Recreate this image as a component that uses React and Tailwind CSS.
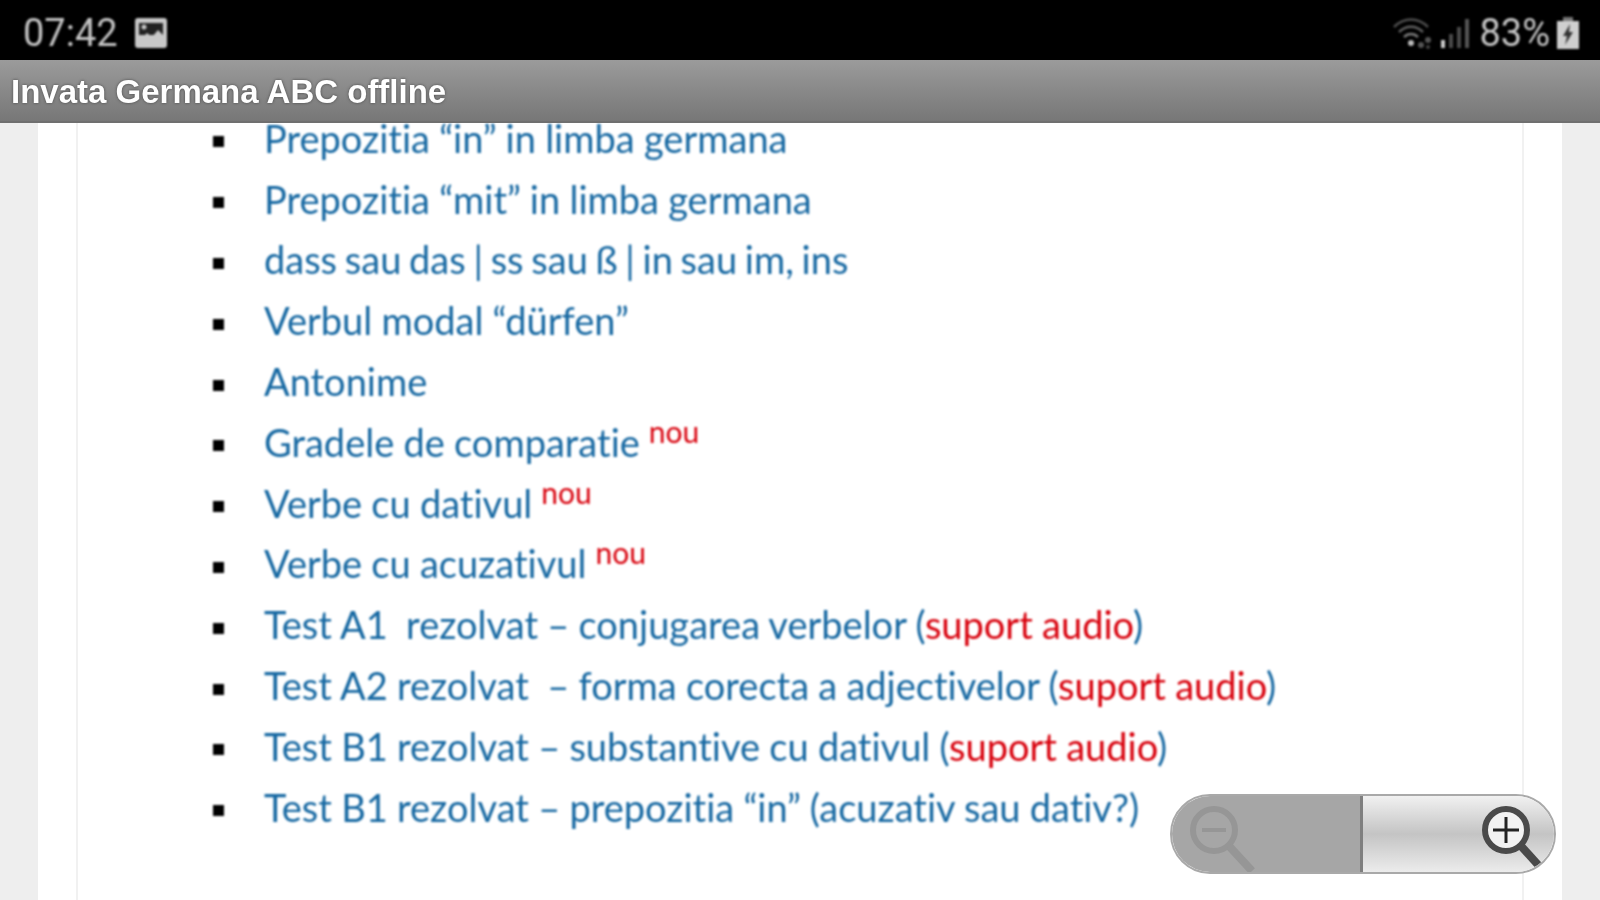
const items = [
  { text: "Prepozitia “in” in limba germana" },
  { text: "Prepozitia “mit” in limba germana" },
  { text: "dass sau das | ss sau ß | in sau im, ins", tight: true },
  { text: "Verbul modal “dürfen”" },
  { text: "Antonime" },
  { text: "Gradele de comparatie", isNew: true },
  { text: "Verbe cu dativul", isNew: true },
  { text: "Verbe cu acuzativul", isNew: true },
  { text: "Test A1\u00a0 rezolvat – conjugarea verbelor", audio: true },
  { text: "Test A2 rezolvat\u00a0 – forma corecta a adjectivelor", audio: true },
  { text: "Test B1 rezolvat – substantive cu dativul", audio: true },
  { text: "Test B1 rezolvat – prepozitia “in” (acuzativ sau dativ?)" },
];

const StatusIcons = () => (
  <div className="mt-[5px] flex items-center blur-[0.8px]">
    <svg width="42" height="34" viewBox="0 0 42 34" fill="none" className="mr-[1px] -translate-x-[5px]">
      <path d="M2 11C12 1 26 1 36 11" stroke="#4d4d4d" strokeWidth="2.5" />
      <path d="M7 16C14 9 24 9 31 16" stroke="#5f5f5f" strokeWidth="2.5" />
      <path d="M12 21C16 17 22 17 26 21" stroke="#777" strokeWidth="2.5" />
      <circle cx="19" cy="27" r="3" fill="#bbb" />
      <circle cx="29" cy="29" r="3" fill="#555" />
      <circle cx="36" cy="24" r="3" fill="#555" />
      <circle cx="36" cy="31" r="2" fill="#444" />
    </svg>
    <svg width="32" height="30" viewBox="0 0 32 30" className="mr-[7px]">
      <rect x="1" y="22" width="4" height="8" fill="#ccc" />
      <rect x="9" y="16" width="4" height="14" fill="#4a4a4a" />
      <rect x="17" y="9" width="4" height="21" fill="#4a4a4a" />
      <rect x="25" y="1" width="4" height="29" fill="#555" />
    </svg>
    <span className="text-[38px] leading-none text-[#c4c4c4] font-['Roboto',sans-serif]">83%</span>
    <svg width="24" height="32" viewBox="0 0 24 32" className="ml-[6px]">
      <rect x="7" y="0" width="10" height="4" fill="#777" />
      <rect x="1" y="4" width="22" height="28" fill="#cfcfcf" />
      <path d="M14 7L7 19H11L9 28L17 15H13Z" fill="#333" />
    </svg>
  </div>
);

const ZoomControl = () => (
  <div className="absolute left-[1170px] top-[794px] flex h-[80px] w-[386px] overflow-hidden rounded-[40px] border-2 border-[#a9a9a9] blur-[0.6px]">
    <div className="flex h-full w-[191px] items-center border-r-[3px] border-[#7f7f7f] bg-[#a6a6a6] pl-[16px]">
      <svg width="72" height="68" viewBox="0 0 72 68" fill="none" className="mt-[10px]">
        <circle cx="26" cy="25" r="21" stroke="#969696" strokeWidth="6" />
        <path d="M14 25H38" stroke="#969696" strokeWidth="4" />
        <path d="M41 41L64 66" stroke="#969696" strokeWidth="8" />
      </svg>
    </div>
    <div className="flex h-full flex-1 items-center justify-end bg-gradient-to-b from-[#f1f1f1] via-[#c4c4c4] to-[#ececec] pr-[6px]">
      <svg width="72" height="68" viewBox="0 0 72 68" fill="none" className="mt-[10px]">
        <circle cx="30" cy="25" r="21" fill="#f2f2f2" stroke="#4a4a4a" strokeWidth="6" />
        <path d="M17 25H43M30 12V38" stroke="#222" strokeWidth="3" />
        <path d="M45 41L64 62" stroke="#4a4a4a" strokeWidth="8" />
      </svg>
    </div>
  </div>
);

export default function App() {
  return (
    <div className="relative flex h-[900px] w-[1600px] flex-col overflow-hidden bg-[#eeeeee] font-['Lato',sans-serif]">
      <div className="z-10 flex h-[60px] shrink-0 items-center justify-between bg-black pl-[23px] pr-[20px]">
        <div className="mt-[5px] flex items-center blur-[0.8px]">
          <span className="text-[38px] leading-none text-[#c4c4c4] font-['Roboto',sans-serif]">07:42</span>
          <svg width="32" height="30" viewBox="0 0 32 30" className="ml-[17px]">
            <rect x="0" y="0" width="32" height="30" rx="3" fill="#c8c8c8" />
            <rect x="4" y="5" width="24" height="12" fill="#222" />
            <path d="M3 24L12 15L17 19L23 12L29 18V26H3Z" fill="#c8c8c8" />
            <circle cx="9" cy="9" r="2.5" fill="#c8c8c8" />
          </svg>
        </div>
        <StatusIcons />
      </div>

      <div className="z-10 flex h-[63px] shrink-0 items-center border-b-2 border-[#6f6f6f] bg-gradient-to-b from-[#9b9b9b] to-[#777777] pl-[11px] pt-[2px]">
        <span className="text-[33px] font-bold leading-none text-white [text-shadow:0_0_3px_#444] blur-[0.5px] font-['Liberation_Sans',sans-serif]">Invata Germana ABC offline</span>
      </div>

      <div className="mx-[38px] min-h-0 flex-1 bg-white px-[38px]">
        <div className="flex h-full flex-col border-x-2 border-[#f1f1f1]">
          <ul className="-mt-[15px] pl-[135px] text-[38px] text-[#1668a2] blur-[0.8px] [font-variant-ligatures:none] [word-spacing:-0.5px]">
            {items.map((item) => (
              <li key={item.text} className="flex h-[60.8px] items-center">
                <span className="mr-[40px] mt-[7px] h-[11px] w-[11px] shrink-0 bg-black" />
                <span className={item.tight ? "whitespace-pre [word-spacing:-2px]" : "whitespace-pre"}>
                  {item.text}
                  {item.isNew && (
                    <span className="relative -top-[14px] ml-[9px] text-[30px] text-[#d8000c]">nou</span>
                  )}
                  {item.audio && (
                    <>
                      {" ("}
                      <span className="text-[#d8000c]">suport audio</span>
                      {")"}
                    </>
                  )}
                </span>
              </li>
            ))}
          </ul>
        </div>
      </div>

      <ZoomControl />
    </div>
  );
}
